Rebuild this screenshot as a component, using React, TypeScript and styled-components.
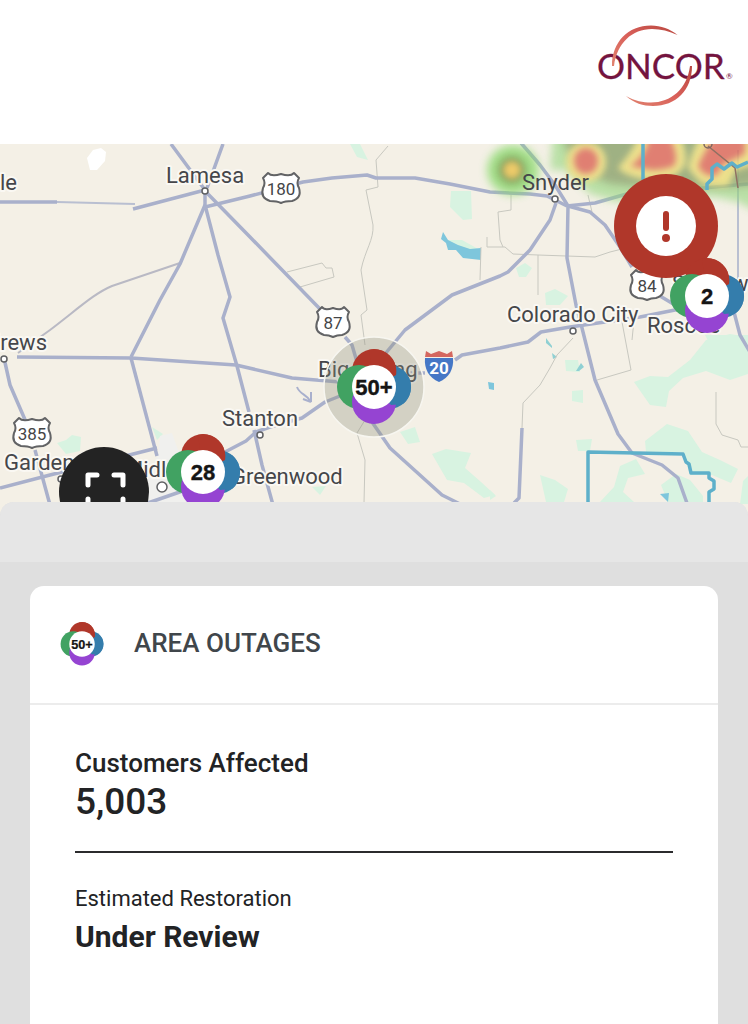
import React from "react";
import styled, { createGlobalStyle } from "styled-components";

const GlobalStyle = createGlobalStyle`
  *, *::before, *::after { box-sizing: border-box; }
  html, body { margin: 0; padding: 0; }
  body {
    background: #dfdfdf;
    color: #222325;
    font-family: Roboto, "Liberation Sans", sans-serif;
  }
`;

const Page = styled.div`
  display: flex;
  flex-direction: column;
  min-height: 100vh;
`;

const TopBar = styled.header`
  display: flex;
  justify-content: flex-end;
  align-items: flex-start;
  height: 144px;
  padding: 20px 12px;
  background: #ffffff;
`;

const HomeLink = styled.a`
  display: block;
  line-height: 0;
`;

const MapArea = styled.section`
  position: relative;
  width: 100%;
  aspect-ratio: 748 / 370;
  overflow: hidden;
  background: #f4f0e6;
`;

const MapArt = styled.svg`
  display: block;
  width: 100%;
  height: 100%;
`;

/* x and y are in the map's own 748 x 370 space */
const Pin = styled.button<{ $x: number; $y: number; $size: number }>`
  position: absolute;
  left: ${(p) => (p.$x / 748) * 100}%;
  top: ${(p) => (p.$y / 370) * 100}%;
  width: ${(p) => p.$size}px;
  height: ${(p) => p.$size}px;
  transform: translate(-50%, -50%);
  padding: 0;
  border: 0;
  border-radius: 50%;
  background: none;
  line-height: 0;
  cursor: pointer;
`;

const Sheet = styled.main`
  position: relative;
  display: flex;
  flex: 1;
  flex-direction: column;
  margin-top: -12px;
  border-radius: 14px 14px 0 0;
  background: #dfdfdf;
`;

const Grip = styled.div`
  height: 60px;
  border-radius: 14px 14px 0 0;
  background: #e6e6e6;
`;

const Card = styled.article`
  display: flex;
  flex: 1;
  flex-direction: column;
  margin: 24px 30px 0;
  border-radius: 14px 14px 0 0;
  background: #ffffff;
`;

const CardHeader = styled.header`
  display: flex;
  align-items: center;
  gap: 30px;
  height: 119px;
  padding: 0 30px 2px;
  border-bottom: 2px solid #ececec;
  line-height: 0;
`;

const CardTitle = styled.h1`
  margin: 0;
  padding-bottom: 2px;
  color: #40464b;
  font-size: 26px;
  font-weight: 500;
  line-height: 32px;
`;

const Facts = styled.dl`
  display: flex;
  flex-direction: column;
  margin: 0;
  padding: 40px 45px;
`;

const Fact = styled.div`
  & + & {
    margin-top: 28px;
    padding-top: 28px;
    border-top: 2px solid #2b2b2d;
  }
`;

const Term = styled.dt<{ $strong?: boolean }>`
  font-size: ${(p) => (p.$strong ? 26 : 22)}px;
  font-weight: ${(p) => (p.$strong ? 500 : 400)};
  line-height: 36px;
`;

const Value = styled.dd<{ $large?: boolean }>`
  margin: 0;
  font-size: ${(p) => (p.$large ? 37 : 30)}px;
  font-weight: ${(p) => (p.$large ? 500 : 700)};
  line-height: ${(p) => (p.$large ? 42 : 40)}px;
`;

function OncorLogo() {
  return (
    <svg width="140" height="90" viewBox="596 20 140 90" role="img" aria-label="Oncor">
      <defs>
        <linearGradient id="arcTop" x1="0" y1="1" x2="1" y2="0">
          <stop offset="0" stopColor="#e0836f" />
          <stop offset="0.5" stopColor="#d9605a" />
          <stop offset="1" stopColor="#b8473f" />
        </linearGradient>
      </defs>
      <text x="597" y="79" fontFamily="Lato, sans-serif" fontSize="35" fill="#74143f" stroke="#74143f" strokeWidth="0.3">
        ONCOR
      </text>
      <text x="726" y="79" fontFamily="Lato, sans-serif" fontSize="8" fill="#74143f">
        ®
      </text>
      <path d="M612 66C612 42 628 25.500 651 25.500C661 25.500 670 29 677.500 35C669 31 661 29 652 29C632 29 617 43 614 66Z" fill="url(#arcTop)" />
      <path d="M692 66C692 90 676 106 653 106C643 106 634 103 626 96C635 101 643 102.500 651 102.500C671 102.500 687 89 690 66Z" fill="url(#arcTop)" />
    </svg>
  );
}

function ClusterIcon({ count, size }: { count: string; size: number }) {
  return (
    <svg width={size} height={size} viewBox="-38 -38 76 76" aria-hidden="true">
      <circle cx="15" cy="0" r="22" fill="#347dac" />
      <circle cx="0" cy="-16" r="22" fill="#b0372a" />
      <circle cx="-15" cy="0" r="22" fill="#41a262" />
      <circle cx="0" cy="15" r="22" fill="#9544d2" />
      <path d="M0 0L29 -17A22 22 0 0 1 29 17L17 18Z" fill="#347dac" />
      <path d="M0 0L-5 -37A22 22 0 0 1 22 -12Z" fill="#b0372a" />
      <circle r="22" fill="#ffffff" />
      <text
        y="8"
        textAnchor="middle"
        fontFamily="'Liberation Sans', sans-serif"
        fontSize="22"
        fontWeight="700"
        fill="#151515"
        stroke="#151515"
        strokeWidth="0.4"
      >
        {count}
      </text>
    </svg>
  );
}

const majorRoads = [
  "M0 202H57",
  "M133 209L205 190",
  "M171 144L205 190M223 144L207 188",
  "M206 192L250 237L320 309",
  "M205 207L250 196L303 182L332 178L367 175L376 178L415 178L450 184L490 192L530 194L547 196L567 206",
  "M205 205L180 264L160 300L131 357",
  "M205 192V205L218 255L230 297L223 318L237 366L249 412",
  "M17 357L131 358L236 365L292 378L340 382",
  "M131 358L157 456",
  "M4 358L10 385L26 422M35 450L50 505",
  "M0 488L50 475L157 448",
  "M145 504L200 485M225 452L246 441L256 432L270 427L302 418L325 402L350 392",
  "M254 430L262 465L273 505",
  "M345 337L352 345L357 362",
  "M385 354L405 330L452 295L500 276L508 272L530 250L550 220L556 203",
  "M372 422L390 448L442 495L460 504",
  "M408 373H425M455 360L462 355L500 348L528 342L541 332L570 327L640 317L690 307",
  "M521 143L540 165L555 185L568 206L590 212L605 225L620 247L632 267M655 293L675 305",
  "M567 206L595 203L630 193L680 190L748 184",
  "M568 206L567 258L576 305L582 328L595 380L618 434L632 453L662 465L678 478L688 506",
  "M522 428L519 498L514 503",
  "M734 312L740 335L750 352",
];

const minorRoads = [
  "M388 146L376 160L378 187L366 190L373 225C374 240 365 250 361 270L367 310L361 315L365 345M365 420L357 433L365 460L364 503",
  "M287 272L322 263L326 268H332L334 277L300 287",
  "M511 195V210L498 212L500 240L503 247M487 237V247H505L513 254L538 255L595 257L610 252L622 249M538 255V295M481 247L480 280",
  "M573 338L557 355L550 368L540 385L523 403L522 428",
  "M622 322L631 370L597 380",
  "M716 392V424L722 435L738 440L741 447H748",
  "M588 195L592 212M634 320L632 340",
];

const parks = [
  "M350 144H360L368 160L357 157Z",
  "M451 191H471L472 219L463 220L450 207Z",
  "M447 240L462 240L480 250L464 250Z",
  "M516 268L525 263L532 268L526 277H519Z",
  "M545 293L555 289L568 296L560 305H546Z",
  "M565 360H578L580 372L566 371Z",
  "M572 391L583 390V403L572 401Z",
  "M576 440L592 439L590 451H578Z",
  "M634 382L650 376L668 377L690 360L706 340L730 334L748 337V374L730 380L706 371L683 378L669 391L666 407L650 405Z",
  "M645 441L667 424L688 431L702 452L720 460L738 469L731 483L712 475H690L683 452H646Z",
  "M620 466L636 459L645 474L628 478L623 492L634 502H600L614 487Z",
  "M661 485L676 474L690 480L703 496V502H668Z",
  "M540 475L555 480L568 489L564 502H546Z",
  "M432 454L446 449L471 453L465 468L481 482L495 495L484 498L464 483L447 480Z",
  "M400 432L415 427L420 442L408 444Z",
  "M57 443L66 440L72 435L81 437L80 451L66 454Z",
  "M152 427L163 434L157 440Z",
  "M312 487L326 486L320 495Z",
  "M705 335H748V348H712Z",
  "M743 481L748 476V504H740Z",
  "M490 490L496 496L490 500Z",
];

const places: { name: string; x: number; y: number; end?: boolean; plain?: boolean }[] = [
  { name: "Lamesa", x: 166, y: 183 },
  { name: "Seminole", x: 17, y: 190, end: true },
  { name: "Andrews", x: 47, y: 350, end: true },
  { name: "Snyder", x: 522, y: 190, plain: true },
  { name: "Colorado City", x: 507, y: 322 },
  { name: "Roscoe", x: 647, y: 333 },
  { name: "Sweetwater", x: 672, y: 291 },
  { name: "Big Spring", x: 318, y: 377 },
  { name: "Stanton", x: 222, y: 426 },
  { name: "Greenwood", x: 231, y: 484 },
  { name: "Gardendale", x: 4, y: 470 },
  { name: "Midland", x: 124, y: 477 },
];

const towns = [
  [205, 191], [4, 359], [555, 199], [573, 331], [260, 435], [162, 487], [61, 479],
];

const shields = [
  { route: "180", x: 281, y: 188, half: 19 },
  { route: "87", x: 333, y: 322, half: 17 },
  { route: "385", x: 32, y: 433, half: 19 },
  { route: "84", x: 647, y: 285, half: 17 },
];

function UsShield({ route, x, y, half: h }: { route: string; x: number; y: number; half: number }) {
  const outline =
    `M${-h + 1} -10L${-h + 6} -15Q${-h / 2} -11 0 -14Q${h / 2} -11 ${h - 6} -15L${h - 1} -10` +
    `Q${h - 4} -5 ${h - 1} 0Q${h + 2} 10 ${h - 8} 13Q4 13 0 15Q-4 13 ${-h + 8} 13Q${-h - 2} 10 ${-h + 1} 0Q${-h + 4} -5 ${-h + 1} -10Z`;
  return (
    <g transform={`translate(${x} ${y})`}>
      <path d={outline} fill="#ffffff" stroke="#626365" strokeWidth="2" strokeLinejoin="round" />
      <text y="7" textAnchor="middle" fontSize="17" fill="#444547">{route}</text>
    </g>
  );
}

function Radar() {
  return (
    <g opacity="0.86">
      <g filter="url(#wide)">
        <ellipse cx="513" cy="170" rx="26" ry="25" fill="#86d968" opacity="0.85" />
        <path d="M553 132H764V215L738 202L715 197H650L618 202L590 194L566 170H550Z" fill="#93d67c" opacity="0.7" />
        <path d="M560 132H764V184L725 188H650L610 184L575 170Z" fill="#8d9d6c" opacity="0.85" />
        <circle cx="512" cy="170" r="14" fill="#6f8c48" />
      </g>
      <g filter="url(#tight)">
        <circle cx="512" cy="170" r="9" fill="#ecc455" />
        <ellipse cx="586" cy="162" rx="20" ry="20" fill="#ecdf7e" />
        <path d="M618 168Q634 150 640 134H678Q688 150 685 164Q678 180 652 180Q628 178 618 168Z" fill="#ecdf7e" />
        <path d="M688 168Q692 150 702 134H764V162L736 170L728 186Q706 188 698 180Z" fill="#ecdf7e" />
      </g>
      <g filter="url(#tight)">
        <ellipse cx="586" cy="161" rx="12" ry="13" fill="#dd6d60" />
        <path d="M630 166Q648 154 650 134H668Q680 156 674 166Q664 170 652 170Z" fill="#dd6d60" />
        <path d="M698 166Q704 152 716 134H745V154L724 164L716 176Q702 176 698 166Z" fill="#dd6d60" />
      </g>
    </g>
  );
}

function PlaceNames({ plain = false }: { plain?: boolean }) {
  return (
    <g
      fontSize="22"
      fill="#45464a"
      stroke={plain ? "none" : "#faf8f3"}
      strokeWidth="4"
      strokeLinejoin="round"
      paintOrder="stroke"
    >
      {places
        .filter((p) => Boolean(p.plain) === plain)
        .map((p) => (
          <text key={p.name} x={p.x} y={p.y} textAnchor={p.end ? "end" : "start"}>{p.name}</text>
        ))}
    </g>
  );
}

function RegionMap() {
  return (
    <MapArt viewBox="0 144 748 370" preserveAspectRatio="xMidYMid slice" role="img" aria-label="Map of west Texas outages">
      <defs>
        <filter id="wide" x="-30%" y="-30%" width="160%" height="160%"><feGaussianBlur stdDeviation="4" /></filter>
        <filter id="tight" x="-30%" y="-30%" width="160%" height="160%"><feGaussianBlur stdDeviation="3" /></filter>
      </defs>
      <rect y="144" width="748" height="370" fill="#f4f0e6" />
      <g fill="#d8f3e1">{parks.map((d) => <path key={d} d={d} />)}</g>
      <path d="M160 436L172 433L178 450L190 460V502H135L150 470L158 455Z" fill="#f0f0ee" />
      <path d="M87 158L93 150L101 148L106 152L105 161L97 170H90Z" fill="#ffffff" />
      <g fill="#7ec6dc">
        <path d="M441 239L443 232L448 240L458 245L470 249L481 248L481 260L463 258L456 250L448 250L446 243Z" />
        <path d="M546 338L552 346V348L546 343ZM552 353L557 357L553 359ZM576 371L581 363L584 367L579 371Z" fill="#8fd0d3" />
        <path d="M488 382L494 383V390L489 389ZM660 494L669 493L668 502Z" />
      </g>
      <path d="M297 387C300 395 307 394 311 402V392M311 402L303 399" fill="none" stroke="#a9b0cd" strokeWidth="2" />

      <g fill="none" stroke="#c8c8c0" strokeWidth="1">{minorRoads.map((d) => <path key={d} d={d} />)}</g>
      <path d="M57 202L135 204M738 150V290" fill="none" stroke="#b9bfd1" strokeWidth="2" />
      <path d="M180 263L112 286C95 293 80 307 50 330L18 353" fill="none" stroke="#b9b9c4" strokeWidth="2" />
      <g fill="none" stroke="#a9b0cb" strokeWidth="3.500" strokeLinejoin="round">
        {majorRoads.map((d) => <path key={d} d={d} />)}
      </g>

      <PlaceNames />
      <Radar />
      <PlaceNames plain />
      <g fill="#ffffff" stroke="#5f6063" strokeWidth="1.500">
        {towns.map(([x, y]) => <circle key={x} cx={x} cy={y} r={x === 162 ? 5 : 3} />)}
      </g>
      <path d="M708 146L735 168L738 188" fill="none" stroke="#8f7062" strokeWidth="1.500" />
      <circle cx="708" cy="144" r="4" fill="none" stroke="#7d6560" strokeWidth="1.500" />
      <g fill="none" stroke="#5eb0ca" strokeWidth="3.500" strokeLinejoin="round">
        <path d="M588 504V452L683 454L686 462L689 464L691 473H709V478L714 481V489L709 492V504" />
        <path d="M643 144V180M707 190V184L712 179V168L717 164L724 169L732 163L737 167L748 162" />
      </g>
      {shields.map((s) => <UsShield key={s.route} {...s} />)}

      <g transform="translate(439 367)">
        <path d="M-14 -9H14C15 2 10 11 0 15C-10 11 -15 2 -14 -9Z" fill="#4577c6" />
        <path d="M-13 -16L-8 -13L0 -16L8 -13L13 -16L14 -10H-14Z" fill="#d4675f" />
        <text y="7" textAnchor="middle" fontSize="17" fontWeight="700" fill="#ffffff">20</text>
      </g>
      <circle cx="374" cy="387" r="50" fill="#8f907c" fillOpacity="0.32" stroke="#f7f6f0" strokeWidth="1.500" />
    </MapArt>
  );
}

export default function App() {
  return (
    <>
      <GlobalStyle />
      <Page>
        <TopBar>
          <HomeLink href="#"><OncorLogo /></HomeLink>
        </TopBar>
        <MapArea>
          <RegionMap />
          <Pin type="button" aria-label="Outage alert" $x={666} $y={82} $size={104}>
            <svg width="104" height="104" viewBox="-52 -52 104 104" aria-hidden="true">
              <circle r="52" fill="#b0372a" />
              <circle r="30" fill="#ffffff" />
              <path d="M0 -12V2" stroke="#b0372a" strokeWidth="6" strokeLinecap="round" />
              <circle cy="12" r="4" fill="#b0372a" />
            </svg>
          </Pin>
          <Pin type="button" aria-label="2 outages" $x={707} $y={152} $size={76}>
            <ClusterIcon count="2" size={76} />
          </Pin>
          <Pin type="button" aria-label="50+ outages" $x={374} $y={243} $size={76}>
            <ClusterIcon count="50+" size={76} />
          </Pin>
          <Pin type="button" aria-label="28 outages" $x={203} $y={328} $size={76}>
            <ClusterIcon count="28" size={76} />
          </Pin>
          <Pin type="button" aria-label="Full screen" $x={104} $y={348} $size={90}>
            <svg width="90" height="90" viewBox="-45 -45 90 90" aria-hidden="true">
              <circle r="45" fill="#232323" />
              <path
                d="M-16 -7V-17H-7M10 -17H19V-7M19 7V17H10M-7 17H-16V7"
                fill="none"
                stroke="#ffffff"
                strokeWidth="5"
                strokeLinecap="round"
                strokeLinejoin="round"
              />
            </svg>
          </Pin>
        </MapArea>
        <Sheet>
          <Grip />
          <Card>
            <CardHeader>
              <ClusterIcon count="50+" size={44} />
              <CardTitle>AREA OUTAGES</CardTitle>
            </CardHeader>
            <Facts>
              <Fact>
                <Term $strong>Customers Affected</Term>
                <Value $large>5,003</Value>
              </Fact>
              <Fact>
                <Term>Estimated Restoration</Term>
                <Value>Under Review</Value>
              </Fact>
            </Facts>
          </Card>
        </Sheet>
      </Page>
    </>
  );
}
